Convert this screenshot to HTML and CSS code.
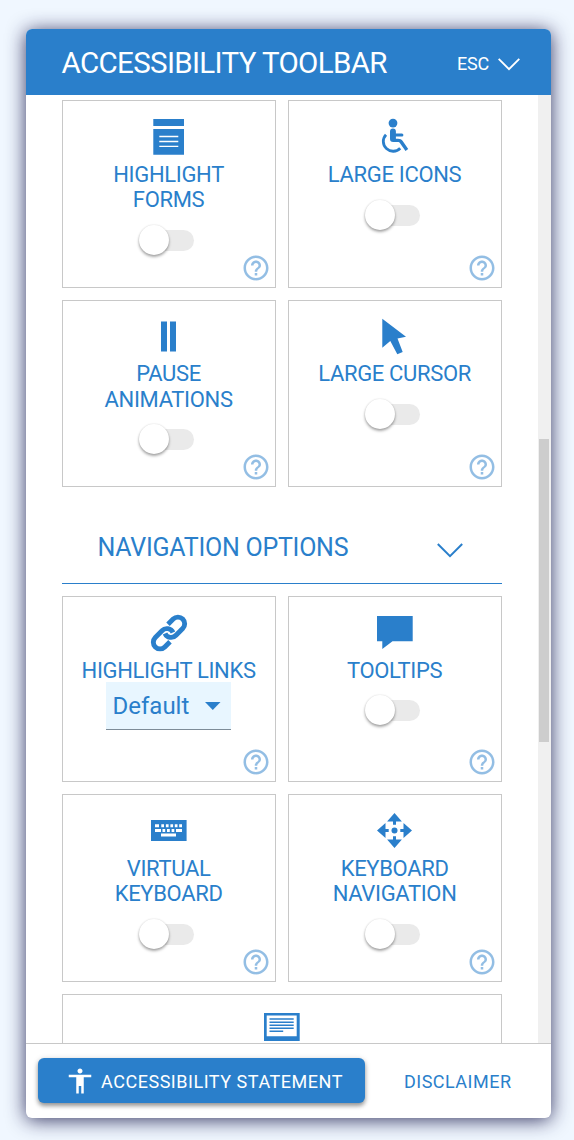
FILE: index.html
```html
<!DOCTYPE html>
<html lang="en">
<head>
<meta charset="utf-8">
<title>Accessibility Toolbar</title>
<link rel="stylesheet" href="styles.css">
</head>
<body>
<svg width="0" height="0" class="sprite" aria-hidden="true">
  <symbol id="help" viewBox="0 0 24 24"><path d="M11 18h2v-2h-2v2zm1-16C6.48 2 2 6.48 2 12s4.480 10 10 10 10-4.480 10-10S17.520 2 12 2zm0 18c-4.410 0-8-3.590-8-8s3.590-8 8-8 8 3.590 8 8-3.590 8-8 8zm0-14c-2.210 0-4 1.790-4 4h2c0-1.100.9-2 2-2s2 .9 2 2c0 2-3 1.750-3 5h2c0-2.250 3-2.500 3-5 0-2.210-1.790-4-4-4z"/></symbol>
</svg>
<main class="panel">
  <header class="header">
    <h1 class="header-title">ACCESSIBILITY TOOLBAR</h1>
    <button class="close">ESC
      <svg class="close-icon" width="22" height="13" viewBox="0 0 22 13"><path d="M.7.900 11 11.100 21.300.9" fill="none" stroke="#fff" stroke-width="1.900"/></svg>
    </button>
  </header>

  <div class="body">
    <div class="content">
      <section class="grid">
        <article class="card card-a">
          <svg class="icon" viewBox="0 0 36 36"><path d="M2.300 0H33v7H2.300zM2.300 10H33v25.700H2.300z"/><path d="M8.300 17.500h19M8.300 22.500h19M8.300 27.300h19" stroke="#fff" stroke-width="1.300"/></svg>
          <h3 class="card-title">HIGHLIGHT<br>FORMS</h3>
          <span class="toggle"><span class="knob"></span></span>
          <svg class="help"><use href="#help"/></svg>
        </article>
        <article class="card card-a">
          <svg class="icon" viewBox="0 0 36 36"><circle cx="16" cy="4.100" r="4.400"/><path d="M13 12.500a2.950 2.950 0 0 1 5.900 0v1.900h6a1.500 1.500 0 0 1 0 3h-6v2.300h2.100c2.200 0 3.600.7 4.700 2.400l5.500 8-2.700 1.900-5.300-7.600c-.7-1-1.300-1.300-2.400-1.300h-4.600c-2.200 0-3.200-1.200-3.200-3z"/><path d="M9.800 15.800A9.700 9.700 0 1 0 24 29.200" transform="translate(-.8 0)" fill="none" stroke="#2a7fcb" stroke-width="2.800"/></svg>
          <h3 class="card-title">LARGE ICONS</h3>
          <span class="toggle"><span class="knob"></span></span>
          <svg class="help"><use href="#help"/></svg>
        </article>
        <article class="card card-b">
          <svg class="icon" viewBox="0 0 36 36"><path d="M10 2.400h6v30.200h-6zM19 2.400h6v30.200h-6z"/></svg>
          <h3 class="card-title">PAUSE<br>ANIMATIONS</h3>
          <span class="toggle"><span class="knob"></span></span>
          <svg class="help"><use href="#help"/></svg>
        </article>
        <article class="card card-b">
          <svg class="icon" viewBox="0 0 36 36"><path d="M5.300-.3 29 17.700l-8.500 1.800L25.700 33l-5.400 2.300-7-13.300-8 6.800z"/></svg>
          <h3 class="card-title">LARGE CURSOR</h3>
          <span class="toggle"><span class="knob"></span></span>
          <svg class="help"><use href="#help"/></svg>
        </article>
      </section>

      <div class="section-head">
        <h2 class="section-title">NAVIGATION OPTIONS</h2>
        <svg class="section-icon" width="26" height="15" viewBox="0 0 26 15"><path d="M.8 1 13 13.200 25.200 1" fill="none" stroke="#2a7fcb" stroke-width="2"/></svg>
      </div>

      <section class="grid">
        <article class="card card-c">
          <svg class="icon" viewBox="0 0 36 36"><g fill="none" stroke="#2a7fcb" stroke-width="4.900"><path d="M17 9.300l5.200-5.200a6.700 6.700 0 0 1 9.500 9.500l-6.700 6.700a6.700 6.700 0 0 1-11-1.900"/><path d="M19 26.700l-5.200 5.200a6.700 6.700 0 0 1-9.500-9.500l6.700-6.700a6.700 6.700 0 0 1 11 1.900"/></g></svg>
          <h3 class="card-title">HIGHLIGHT LINKS</h3>
          <div class="select">Default<svg width="16" height="8" viewBox="0 0 16 8"><path d="M0 0h15.500L7.750 8z"/></svg></div>
          <svg class="help"><use href="#help"/></svg>
        </article>
        <article class="card card-c">
          <svg class="icon" viewBox="0 0 36 36"><path d="M0 1h35.700v25.300H15.500L5.300 34v-7.700H0z"/></svg>
          <h3 class="card-title">TOOLTIPS</h3>
          <span class="toggle"><span class="knob"></span></span>
          <svg class="help"><use href="#help"/></svg>
        </article>
        <article class="card card-d">
          <svg class="icon" viewBox="0 0 36 36"><path d="M0 7h35.600v21H0z"/><path fill="#fff" d="M4 11.300h4v3H4zM10.300 11.300H13v3h-2.700zM14.900 11.300h2.700v3h-2.700zM19.400 11.300h2.700v3h-2.700zM23.800 11.300h2.700v3h-2.700zM28.200 11.300H31v3h-2.800zM4 16h6v3H4zM11.500 16h2.700v3h-2.700zM16 16h2.800v3H16zM20.600 16h2.700v3h-2.700zM25 16h6v3h-6zM10 20.500h15v3H10z"/></svg>
          <h3 class="card-title">VIRTUAL<br>KEYBOARD</h3>
          <span class="toggle"><span class="knob"></span></span>
          <svg class="help"><use href="#help"/></svg>
        </article>
        <article class="card card-d">
          <svg class="icon" viewBox="0 0 36 36"><circle cx="17.500" cy="17.500" r="3"/><path id="arm" d="M17.500 0l7.400 8.500H19v3.200h-3V8.500h-5.900z"/><use href="#arm" transform="rotate(90 17.500 17.500)"/><use href="#arm" transform="rotate(180 17.500 17.500)"/><use href="#arm" transform="rotate(270 17.500 17.500)"/></svg>
          <h3 class="card-title">KEYBOARD<br>NAVIGATION</h3>
          <span class="toggle"><span class="knob"></span></span>
          <svg class="help"><use href="#help"/></svg>
        </article>
        <article class="card card-wide">
          <svg class="icon" viewBox="0 0 36 36"><path fill-rule="evenodd" d="M0 0h35.700v28H0zM2.700 2.500v20.700h30V2.500z"/><path d="M5.500 6h24.200M5.500 9.200h24.200M5.500 12.200h24.200M5.500 15.200h24.200M5.500 18.200h13.700" stroke="#2a7fcb" stroke-width="1.500"/></svg>
        </article>
      </section>
    </div>
    <div class="scrollbar"><div class="thumb"></div></div>
  </div>

  <footer class="footer">
    <button class="statement"><svg width="30" height="30" viewBox="0 0 24 24"><path d="M12 2c1.100 0 2 .9 2 2s-.9 2-2 2-2-.9-2-2 .9-2 2-2zm9 7h-6v13h-2v-6h-2v6H9V9H3V7h18v2z"/></svg>ACCESSIBILITY STATEMENT</button>
    <button class="disclaimer">DISCLAIMER</button>
  </footer>
</main>
</body>
</html>
```
FILE: styles.css
```css
* { box-sizing: border-box; }
html, body { height: 100%; }
body {
  margin: 0;
  padding: 29px 23px 22px 26px;
  background: #f0f7ff;
  font-family: Roboto, "Liberation Sans", sans-serif;
  color: #2a7fcb;
  overflow: hidden;
}
h1, h2, h3 { margin: 0; font-weight: 400; }
svg { fill: #2a7fcb; display: block; }
button { font: inherit; border: 0; background: none; color: inherit; padding: 0; white-space: nowrap; }
.sprite { position: absolute; }

.panel {
  height: 1089px;
  display: flex;
  flex-direction: column;
  background: #fff;
  border-radius: 6px;
  box-shadow: 0 2px 19px rgba(20, 20, 70, .85);
}
.header {
  height: 66px;
  flex: none;
  display: flex;
  align-items: center;
  justify-content: space-between;
  padding: 2px 31.500px 0 35.500px;
  background: #2a7fcb;
  color: #fff;
  border-radius: 6px 6px 0 0;
}
.header-title { font-size: 29.500px; letter-spacing: -.65px; }
.close { display: flex; align-items: center; gap: 8.500px; font-size: 18px; letter-spacing: -.2px; }
.close-icon { margin-top: 3px; }

.body { display: flex; height: 948px; flex: none; overflow: hidden; }
.content { flex: 1; padding: 5px 36px 0; }
.scrollbar { width: 13px; background: #f0f0f0; padding: 344px 2px 0 1px; flex: none; }
.thumb { height: 303px; background: #cdcdcd; }

.grid { display: grid; grid-template-columns: 214px 214px; gap: 12px; }
.card {
  position: relative;
  border: 1px solid #c8c8c8;
  padding-top: 18px;
  display: flex;
  flex-direction: column;
  align-items: center;
}
.card-a, .card-d { height: 188px; }
.card-b { height: 187px; }
.card-c { height: 186px; }
.card-wide { grid-column: 1 / 3; height: 188px; }
.icon { width: 36px; height: 36px; flex: none; overflow: visible; }
.card-title {
  margin-top: 7px;
  padding-right: .8px;
  font-size: 22px;
  line-height: 25px;
  letter-spacing: -.33px;
  text-align: center;
  white-space: nowrap;
}
.card-b .card-title { margin-top: 6px; line-height: 25.500px; }
.toggle { position: relative; width: 60px; height: 30px; margin-top: 12.700px; flex: none; }
.card-b .toggle { margin-top: 12px; }
.card-c .toggle { margin-top: 12px; }
.toggle::before {
  content: "";
  display: block;
  width: 50px;
  height: 21px;
  margin: 5px 0 0 5px;
  border-radius: 11px;
  background: #eaeaea;
}
.knob {
  position: absolute;
  left: 0;
  top: 0;
  width: 30px;
  height: 30px;
  border-radius: 50%;
  background: #fff;
  box-shadow: 0 2px 3px rgba(0, 0, 0, .35), 0 0 2px rgba(0, 0, 0, .12);
}
.help { position: absolute; right: 4px; bottom: 4px; width: 30px; height: 30px; opacity: .5; }
.select {
  width: 125px;
  height: 48px;
  margin: -1px 1px 0 0;
  padding: 0 10.500px 0 6.500px;
  display: flex;
  align-items: center;
  justify-content: space-between;
  background: #e8f6ff;
  border-bottom: 1px solid #7d8c98;
  font-size: 24px;
}

.section-head {
  height: 97px;
  margin-bottom: 12px;
  padding: 25px 39px 0 35.500px;
  display: flex;
  align-items: center;
  justify-content: space-between;
  border-bottom: 1px solid #2a7fcb;
}
.section-title { font-size: 25px; letter-spacing: -.25px; }
.section-icon { margin-top: 6px; }

.footer {
  flex: 1;
  display: flex;
  align-items: center;
  padding: 0 12px 2px;
  border-top: 1px solid #c8c8c8;
  font-size: 18px;
}
.statement {
  width: 327px;
  height: 45px;
  padding: 2px 0 0 26.500px;
  display: flex;
  align-items: center;
  gap: 6.500px;
  background: #2a7fcb;
  color: #fff;
  border-radius: 6px;
  box-shadow: 0 3px 4px rgba(0, 0, 0, .35), 0 1px 6px rgba(0, 0, 0, .15);
  letter-spacing: .530px;
}
.statement svg { fill: #fff; margin-top: -1px; }
.disclaimer { margin: 2px 0 0 39px; letter-spacing: .480px; }
```
